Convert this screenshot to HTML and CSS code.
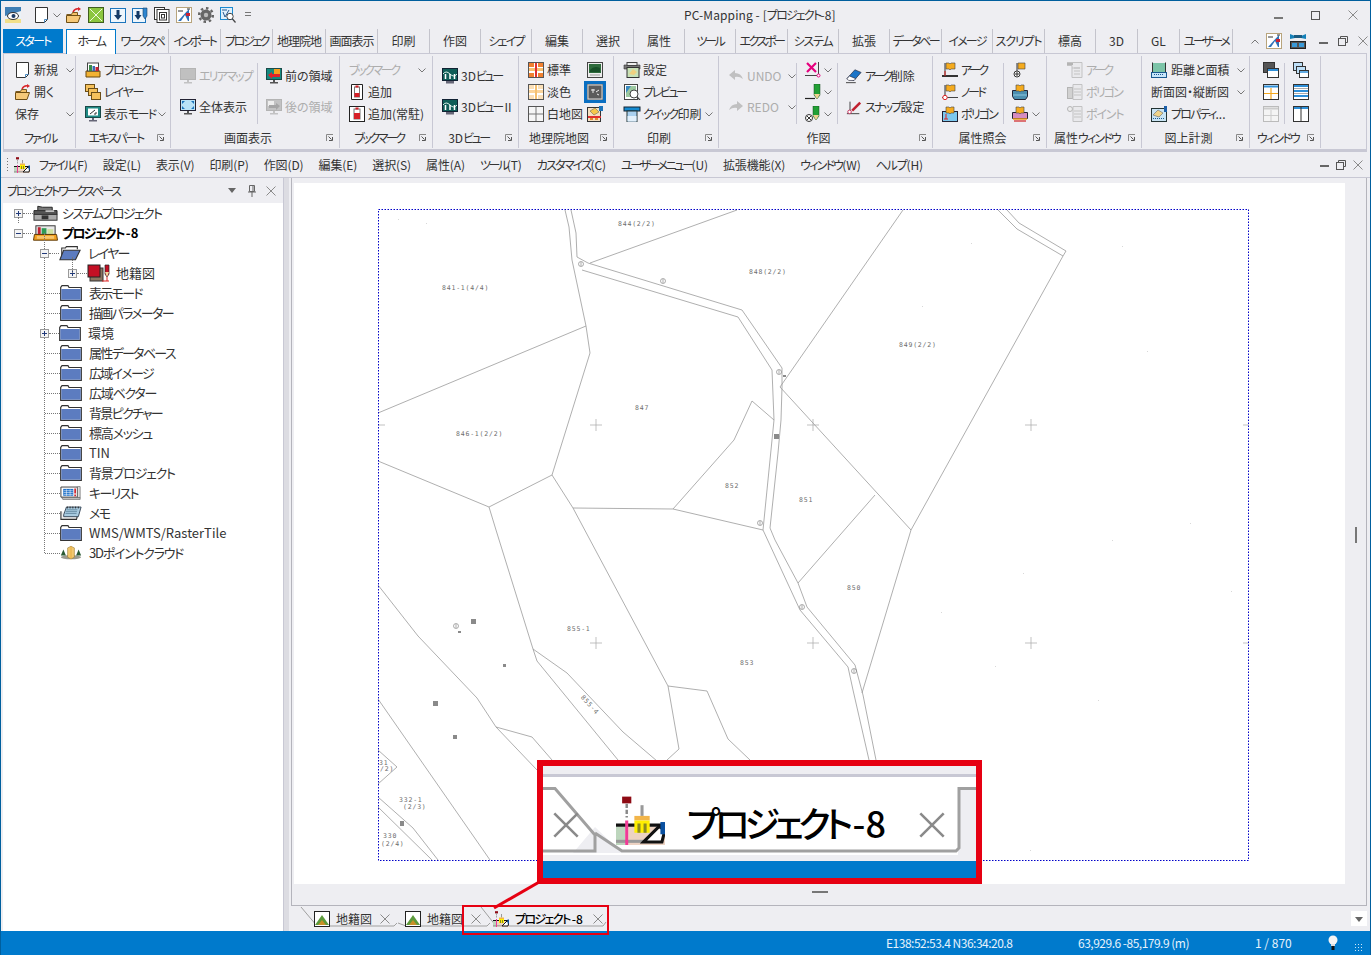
FILE: index.html
```html
<!DOCTYPE html>
<html lang="ja">
<head>
<meta charset="utf-8">
<title>PC-Mapping - [プロジェクト-8]</title>
<link rel="stylesheet" href="styles.css">
</head>
<body>
<svg class="defs" xmlns="http://www.w3.org/2000/svg">
  <symbol id="doc" viewBox="0 0 16 16"><path d="M1.500 .5h12v12l-3 3h-9z" fill="#fff" stroke="#333"/><path d="M10.500 15.500v-3h3" fill="none" stroke="#4a8ac0"/></symbol>
  <symbol id="open" viewBox="0 0 16 16"><path d="M.5 7.500h5l1-2h5v3" fill="#f3c168" stroke="#7a5a20"/><path d="M.5 15.500v-7h14l-2.500 7z" fill="#f6c978" stroke="#6e4e14"/><path d="M7 5q2-4 6-3" fill="none" stroke="#d9252a" stroke-width="1.500"/><path d="M12 0l3 2-3 2z" fill="#d9252a"/></symbol>
  <symbol id="xg" viewBox="0 0 16 16"><rect x=".5" y=".5" width="15" height="15" fill="#8cc63f" stroke="#3f5d20"/><path d="M2 2l12 12M14 2L2 14" stroke="#f2f8e0"/></symbol>
  <symbol id="dl" viewBox="0 0 16 16"><rect x=".5" y="1.500" width="15" height="14" fill="#eef6fc" stroke="#1c75bc"/><path d="M6.500 3h3v5h2.500l-4 5-4-5h2.500z" fill="#143a66"/></symbol>
  <symbol id="dlp" viewBox="0 0 16 16"><rect x=".5" y="1.500" width="13" height="14" fill="#eef6fc" stroke="#1c75bc"/><path d="M4.500 4h3v4h2l-3.500 5-3.500-5h2z" fill="#143a66"/><path d="M11 1h4v8l-2 3-2-3z" fill="#2e86d0" stroke="#1a3f66" stroke-width=".6"/></symbol>
  <symbol id="copies" viewBox="0 0 16 16" fill="#fff" stroke="#333"><rect x=".5" y=".5" width="10" height="12"/><rect x="3" y="2.500" width="12" height="13"/><rect x="5.500" y="5.500" width="7" height="7.500"/><rect x="7.500" y="7.500" width="3" height="3.500"/></symbol>
  <symbol id="lay" viewBox="0 0 16 16"><rect x=".5" y=".5" width="15" height="15" fill="#fff" stroke="#b8a47c"/><path d="M2 14L13 2v12z" fill="#2f72b8"/><path d="M5 14l4-6 3 6z" fill="#fff"/><rect x="10" y="6" width="4" height="3" fill="#cc2233"/><path d="M2 4h5M11 2h3" stroke="#333"/></symbol>
  <symbol id="gear" viewBox="0 0 16 16"><circle cx="8" cy="8" r="5.500" fill="#666"/><circle cx="8" cy="8" r="6.800" fill="none" stroke="#666" stroke-width="2.500" stroke-dasharray="2.500 2.800"/><circle cx="8" cy="8" r="2.200" fill="#bbb"/></symbol>
  <symbol id="find" viewBox="0 0 16 16"><rect x=".5" y=".5" width="12" height="12" fill="#dff0fb" stroke="#1c8ad0"/><path d="M2 3l5 0M3 5l2 5 4-7" fill="none" stroke="#2a5a90"/><circle cx="10" cy="9.500" r="3.200" fill="#fff" stroke="#444"/><path d="M12.500 12l3 3.500" stroke="#444" stroke-width="1.200"/></symbol>
  <symbol id="app" viewBox="0 0 16 16"><rect width="16" height="16" fill="#eaf2f8"/><path d="M0 0h16v4L0 9z" fill="#3f7fb5"/><path d="M0 12h16v4H0z" fill="#f2e08a"/><ellipse cx="8" cy="9" rx="5.500" ry="3.500" fill="#fff" stroke="#333"/><circle cx="8.500" cy="9" r="2" fill="#1d3d66"/></symbol>
  <symbol id="proj" viewBox="0 0 16 16"><path d="M1 9h14v6H1z" fill="#f2b233" stroke="#6b4a10"/><rect x="2.500" y="1" width="11" height="8" fill="#fff" stroke="#444"/><rect x="4" y="3" width="3" height="6" fill="#3a8a4a"/><rect x="7.500" y="4" width="2.500" height="5" fill="#3b6bb5"/><rect x="10.500" y="5" width="3" height="4" fill="#cc2233"/></symbol>
  <symbol id="layer" viewBox="0 0 16 16" fill="#f5c15c" stroke="#6b4e18"><rect x=".5" y=".5" width="9" height="7"/><rect x="3.500" y="4.500" width="9" height="7"/><rect x="6.500" y="8.500" width="9" height="7"/></symbol>
  <symbol id="mview" viewBox="0 0 16 16"><rect x=".5" y=".5" width="15" height="11" fill="#1f8a85" stroke="#1a4a48"/><rect x="3" y="2.500" width="10" height="7" fill="#fff"/><path d="M5 8l5-4M9 8h2V6" stroke="#333" fill="none"/><path d="M7 12h2v2h3v1.500H4V14h3z" fill="#667"/></symbol>
  <symbol id="marea" viewBox="0 0 16 16"><rect x=".5" y=".5" width="15" height="11" fill="#b8b8b8" stroke="#aaa"/><path d="M7 12h2v2h3v1.500H4V14h3z" fill="#bbb"/></symbol>
  <symbol id="mprev" viewBox="0 0 16 16"><rect x=".5" y=".5" width="15" height="11" fill="#148a80" stroke="#1a4a48"/><rect x="8" y="1" width="6" height="5" fill="#f6a01e"/><path d="M2 7l4-3v2h8v3H6v2z" fill="#e0242a"/><path d="M7 12h2v2h3v1.500H4V14h3z" fill="#555"/></symbol>
  <symbol id="mall" viewBox="0 0 16 16"><rect x=".5" y=".5" width="15" height="11" fill="#b8e2f7" stroke="#223"/><path d="M2 2l3 0-3 3zM14 2v3l-3-3zM2 10V7l3 3zM14 10h-3l3-3z" fill="#1c75bc"/><path d="M7 12h2v2h3v1.500H4V14h3z" fill="#555"/></symbol>
  <symbol id="mnext" viewBox="0 0 16 16"><rect x=".5" y=".5" width="15" height="11" fill="#bbb" stroke="#aaa"/><rect x="2" y="2" width="6" height="5" fill="#eee"/><path d="M14 7l-4-3v2H3v3h7v2z" fill="#999"/><path d="M7 12h2v2h3v1.500H4V14h3z" fill="#bbb"/></symbol>
  <symbol id="bk1" viewBox="0 0 16 16"><path d="M2.500 .5h11v15h-11z" fill="#fff" stroke="#222"/><rect x="5.500" y="3" width="5" height="10" fill="#fff" stroke="#777"/><rect x="5.500" y="9" width="5" height="4" fill="#d62028"/><rect x="6.500" y="1.500" width="3" height="2" fill="#d62028"/></symbol>
  <symbol id="bk2" viewBox="0 0 16 16"><rect x=".5" y=".5" width="15" height="15" fill="#fff" stroke="#222"/><rect x="5" y="3" width="6" height="10" fill="#fff" stroke="#777"/><rect x="5" y="7" width="6" height="6" fill="#d62028"/><rect x="6.500" y="1.500" width="3" height="2" fill="#d62028"/></symbol>
  <symbol id="m3d" viewBox="0 0 16 16"><rect x=".5" y=".5" width="15" height="12" fill="#0f5e58" stroke="#123"/><path d="M1 6q3-4 7 0t7 0" fill="none" stroke="#d8f0e8"/><path d="M3.500 6v5M8 6v5M12.500 6v5" stroke="#fff" stroke-width="1.500"/><path d="M4 13h8v2.500H4z" fill="#667"/></symbol>
  <symbol id="gstd" viewBox="0 0 16 16"><rect x=".5" y=".5" width="15" height="15" fill="#fff" stroke="#555"/><path d="M1 1h5v4H1zM10 1h5v4h-5zM1 11h5v4H1zM10 11h5v4h-5z" fill="#f08030"/><path d="M1 6h14v3H1z" fill="#f8c070"/><path d="M7 1h2v14H7z" fill="#e03030"/></symbol>
  <symbol id="gpale" viewBox="0 0 16 16"><rect x=".5" y=".5" width="15" height="15" fill="#fff" stroke="#555"/><path d="M1 1h5v4H1zM10 1h5v4h-5zM1 11h5v4H1zM10 11h5v4h-5z" fill="#fbe0b8"/><path d="M1 6h14v3H1z" fill="#fbd49a"/><path d="M7 1h2v14H7z" fill="#f5c070"/></symbol>
  <symbol id="gwhite" viewBox="0 0 16 16"><rect x=".5" y=".5" width="15" height="15" fill="#f6f6f6" stroke="#555"/><path d="M8 1v14M1 8h14" stroke="#777"/></symbol>
  <symbol id="gphoto" viewBox="0 0 16 16"><rect x=".5" y=".5" width="15" height="15" fill="#eee" stroke="#444"/><rect x="2" y="2" width="12" height="9" fill="#2e6b3c"/><path d="M3 8q4-5 10-2v4H3z" fill="#185028"/><path d="M3 13h10" stroke="#999"/></symbol>
  <symbol id="gcol" viewBox="0 0 16 16"><rect width="16" height="16" fill="#666"/><rect x="1" y="1" width="14" height="14" fill="#5c5c5c" stroke="#ddd"/><path d="M4 6h4M6 5v4M9 8l3-2M10 10l2 1" stroke="#eee"/></symbol>
  <symbol id="gedit" viewBox="0 0 16 16"><rect x=".5" y="1.500" width="13" height="14" fill="#f5e0c0" stroke="#333"/><path d="M1 10h13v2H1z" fill="#e03030"/><path d="M3 5l5-3 4 4-5 3z" fill="#f5c84a" stroke="#555" stroke-width=".5"/><rect x="12" y="0" width="4" height="5" fill="#1c75bc"/><path d="M3 13h3M8 13h3" stroke="#e08a30" stroke-width="2"/></symbol>
  <symbol id="pset" viewBox="0 0 18 16"><path d="M1 3h16v4H1z" fill="#777" stroke="#333" stroke-width=".6"/><rect x="4" y=".5" width="10" height="3" fill="#eee" stroke="#444"/><rect x="4" y="5.500" width="12" height="10" fill="#c9e2b8" stroke="#333"/><path d="M6 12l4-5 4 3-3 3z" fill="#f0d080"/></symbol>
  <symbol id="pprev" viewBox="0 0 16 16"><rect x=".5" y=".5" width="13" height="15" fill="#fff" stroke="#444"/><rect x="2" y="2" width="10" height="11" fill="#9cc8a0"/><path d="M2 2h5l-5 7z" fill="#3a8ac0"/><circle cx="10" cy="10" r="4" fill="#fff" stroke="#444"/><path d="M13 13l3 3" stroke="#444" stroke-width="1.300"/></symbol>
  <symbol id="pq" viewBox="0 0 18 16"><rect x="1" y="1" width="16" height="4" fill="#148ad0" stroke="#123"/><rect x="4" y="5" width="10" height="11" fill="#a9d0ef" stroke="#233"/><rect x="4.500" y="10" width="9" height="5.500" fill="#e2f0fb"/></symbol>
  <symbol id="undo" viewBox="0 0 16 16"><path d="M1 7l6-5v3q6 0 8 6-4-3-8-2v3z" fill="#b9b9b9"/></symbol>
  <symbol id="redo" viewBox="0 0 16 16"><path d="M15 7L9 2v3Q3 5 1 11q4-3 8-2v3z" fill="#b9b9b9"/></symbol>
  <symbol id="dx" viewBox="0 0 16 16"><path d="M2 1l9 9M11 1l-9 9" stroke="#e6007e" stroke-width="2.200"/><path d="M0 13.500h12M13.500 0v12" stroke="#444"/><circle cx="13.500" cy="13.500" r="1.500" fill="#fff" stroke="#e6007e"/></symbol>
  <symbol id="dp" viewBox="0 0 16 16"><path d="M0 14.500h10" stroke="#222" stroke-width="1.200"/><path d="M9 0h6v11l-3 4-3-4z" fill="#21a035" stroke="#1a4a20" stroke-width=".5"/><path d="M9 10h6l-3 5z" fill="#f0d090"/></symbol>
  <symbol id="dc" viewBox="0 0 16 16"><circle cx="4" cy="12" r="3.500" fill="#fff" stroke="#333"/><path d="M2 10l4 4M6 10l-4 4" stroke="#333"/><path d="M8 0h6v10l-3 4-3-4z" fill="#21a035" stroke="#1a4a20" stroke-width=".5"/><path d="M8 9h6l-3 5z" fill="#f0d090"/></symbol>
  <symbol id="eraser" viewBox="0 0 18 16"><path d="M1 11L10 1l7 3-8 9z" fill="#1c75c8" stroke="#223" stroke-width=".7"/><path d="M1 11l3-3 7 3-2 2H3z" fill="#fff" stroke="#223" stroke-width=".7"/><path d="M0 15.500h11" stroke="#333"/></symbol>
  <symbol id="snap" viewBox="0 0 18 16"><path d="M1 15.500h14" stroke="#333"/><path d="M4.500 2v12" stroke="#333"/><path d="M6 11l9-9 2 2-9 9z" fill="#c02030"/><circle cx="4" cy="13.500" r="2" fill="#fff" stroke="#c02050"/></symbol>
  <symbol id="flag" viewBox="0 0 16 16"><path d="M3 1v12" stroke="#333"/><path d="M4 1h3l1 1 1-1h4v6H9L8 8 7 7H4z" fill="#f5ab1e" stroke="#444" stroke-width=".6"/></symbol>
  <symbol id="qa" viewBox="0 0 16 16"><use href="#flag"/><path d="M0 14h16" stroke="#333" stroke-width="2"/><path d="M3 9v5" stroke="#d22"/></symbol>
  <symbol id="qn" viewBox="0 0 16 16"><use href="#flag"/><path d="M0 13.500h16" stroke="#444"/><circle cx="3" cy="13.500" r="2.200" fill="#fff" stroke="#d22"/></symbol>
  <symbol id="qp" viewBox="0 0 16 16"><rect x=".5" y="5.500" width="15" height="10" fill="#7cc8ee" stroke="#223"/><path d="M4 1h3l1 1 1-1h3v6H9L8 8 7 7H4z" fill="#f5ab1e" stroke="#444" stroke-width=".6"/><path d="M4 8v5M2 13h4" stroke="#d22"/></symbol>
  <symbol id="qc" viewBox="0 0 16 16"><path d="M5 1v9" stroke="#333"/><path d="M6 1h7v6H6z" fill="#f5ab1e" stroke="#444" stroke-width=".6"/><circle cx="5" cy="12" r="3" fill="#fff" stroke="#333"/><path d="M3 12h4M5 10v4" stroke="#333"/></symbol>
  <symbol id="qb" viewBox="0 0 16 16"><path d="M.5 6.500h15v6l-2 3h-11l-2-3z" fill="#4c8fb0" stroke="#223"/><path d="M1 11h14" stroke="#8cc8e0"/><path d="M4 1h3l1 1 1-1h3v6H9L8 8 7 7H4z" fill="#f5ab1e" stroke="#444" stroke-width=".6"/></symbol>
  <symbol id="qm" viewBox="0 0 16 16"><path d="M.5 6.500h15v6h-15z" fill="#d68cc0" stroke="#223"/><path d="M1 13h14" stroke="#f2a020" stroke-width="1.500"/><path d="M2 15h12" stroke="#d02020" stroke-width="1.200"/><path d="M4 1h3l1 1 1-1h3v6H9L8 8 7 7H4z" fill="#f5ab1e" stroke="#444" stroke-width=".6"/></symbol>
  <symbol id="ta" viewBox="0 0 16 16"><path d="M0 .5h15v15H5v-12H0z" fill="#e9e9ec" stroke="#bbb"/><path d="M7 6h6M7 9h6M7 12h6M5 6h8" stroke="#bbb"/><path d="M0 1h6v2H0z" fill="#aaa"/></symbol>
  <symbol id="tp" viewBox="0 0 16 16"><rect x=".5" y="3.500" width="5" height="11" fill="#ccc" stroke="#aaa"/><path d="M6 .5h9v15H6z" fill="#e9e9ec" stroke="#bbb"/><path d="M7 5h7M7 8h7M7 11h7" stroke="#bbb"/></symbol>
  <symbol id="tn" viewBox="0 0 16 16"><circle cx="3" cy="3" r="2.500" fill="#eee" stroke="#aaa"/><path d="M6 .5h9v15H6z" fill="#e9e9ec" stroke="#bbb"/><path d="M7 5h7M7 8h7M7 11h7" stroke="#bbb"/></symbol>
  <symbol id="msr" viewBox="0 0 16 16"><path d="M1.500 .5v10M14.500 .5v10" stroke="#333"/><rect x="2" y="1" width="12" height="9" fill="#7cc4a8"/><rect x=".5" y="10.500" width="15" height="5" fill="#c8e6fa" stroke="#1a5a90"/><path d="M3 12.500h10" stroke="#1a5a90" stroke-dasharray="1 1"/></symbol>
  <symbol id="prop" viewBox="0 0 16 16"><rect x=".5" y="2.500" width="15" height="13" fill="#c9e4f4" stroke="#233"/><path d="M2 9l5-5 5 3-4 4z" fill="#f0d48a" stroke="#555" stroke-width=".5"/><rect x="13" y="0" width="3" height="6" fill="#1c5fa8"/><path d="M2 12.500h12" stroke="#1a5a90" stroke-dasharray="1 1"/></symbol>
  <symbol id="w1" viewBox="0 0 16 16"><rect x=".5" y=".5" width="11" height="10" fill="#555" stroke="#333"/><rect x="4.500" y="6.500" width="11" height="9" fill="#fff" stroke="#333"/><rect x="5" y="7" width="10" height="2" fill="#2e8fd8"/></symbol>
  <symbol id="w2" viewBox="0 0 16 16" fill="#bfe0f8" stroke="#333"><rect x=".5" y=".5" width="9" height="8"/><rect x="3.500" y="4.500" width="9" height="7"/><rect x="6.500" y="8.500" width="9" height="7" fill="#fff"/><path d="M7 10h8" stroke="#2e8fd8" stroke-width="1.500"/></symbol>
  <symbol id="w3" viewBox="0 0 16 16"><rect x=".5" y=".5" width="15" height="15" fill="#fff" stroke="#333"/><path d="M1 2.500h14" stroke="#2e8fd8" stroke-width="2"/><path d="M8 4v11M1 9.500h14" stroke="#f5a81e" stroke-width="1.200"/></symbol>
  <symbol id="w4" viewBox="0 0 16 16"><rect x=".5" y=".5" width="15" height="15" fill="#fff" stroke="#333"/><path d="M1 2h14M1 7h14M1 12h14" stroke="#2e8fd8" stroke-width="2"/><path d="M1 4.500h14M1 9.500h14" stroke="#aaa"/></symbol>
  <symbol id="w5" viewBox="0 0 16 16"><rect x=".5" y=".5" width="15" height="15" fill="#f4f4f4" stroke="#bbb"/><path d="M1 2.500h14" stroke="#ccc" stroke-width="2"/><path d="M8 4v11M1 9.500h14" stroke="#ccc"/></symbol>
  <symbol id="w6" viewBox="0 0 16 16"><rect x=".5" y=".5" width="15" height="15" fill="#fff" stroke="#333"/><path d="M1 2h14" stroke="#2e8fd8" stroke-width="2"/><path d="M8 1v14" stroke="#333"/></symbol>
  <symbol id="tabwin" viewBox="0 0 18 16"><path d="M1 1l5 2 6 0 5-2v5l-5-1H6L1 6z" fill="#1480b8"/><rect x="5" y="2" width="8" height="3" fill="#1a5a80"/><rect x="1.500" y="8.500" width="15" height="7" fill="#555" stroke="#222"/><rect x="3" y="10" width="5" height="4" fill="#3a9ad8"/><rect x="10" y="10" width="5" height="4" fill="#3a9ad8"/></symbol>
  <symbol id="mapic" viewBox="0 0 16 16"><rect x="2" y=".2" width="3" height="2.200" fill="#8e0b14"/><path d="M3.500 2.500v4.500" stroke="#888" stroke-width=".8" stroke-dasharray="1.400 .6"/><path d="M8.500 3v3.500" stroke="#999"/><rect x="0" y="10" width="3" height="6" fill="#bdd6bd"/><rect x="4" y="10" width="12" height="6" fill="#edd3c3"/><path d="M0 14.800h9" stroke="#999"/><path d="M0 9.500h16" stroke="#111"/><rect x="3" y="8" width="1" height="8" fill="#f03c96"/><rect x="6" y="6.500" width="5" height="1.500" fill="#f2b54a"/><rect x="6" y="8" width="5" height="4" fill="#ffef00"/><path d="M7.500 9v3M9.500 9v3" stroke="#8a8a20"/><path d="M9 15l5-5 2 1-1 4z" fill="#fff" stroke="#111"/><path d="M14.500 8.500h1.500v4h-1.500z" fill="#0a50a0"/></symbol>
  <symbol id="fld" viewBox="0 0 22 16"><path d="M.7 2.500V15.300h20.600V2.500H9L8 .7H2z" fill="#fff" stroke="#333" stroke-width="1.200"/><rect x="1.300" y="4" width="19.400" height="10.700" fill="#5c7cc0"/></symbol>
  <symbol id="fldo" viewBox="0 0 24 16"><path d="M3 12V2.500h4L8 1h12v3" fill="#fff" stroke="#333" stroke-width="1.200"/><path d="M1 15.300L5 5h18l-5 10.300z" fill="#5c7cc0" stroke="#333" stroke-width="1.200"/></symbol>
  <symbol id="sys" viewBox="0 0 26 16"><path d="M5 5V1l5 1h10v3" fill="#777" stroke="#222"/><path d="M1 5.500h24v4H1z" fill="#555" stroke="#222"/><rect x="1" y="9.500" width="24" height="6" fill="#aaa" stroke="#333"/><rect x="9" y="10.500" width="7" height="4" fill="#333"/><path d="M13 6h9" stroke="#ddd" stroke-width="1.500"/></symbol>
  <symbol id="prj" viewBox="0 0 26 16"><rect x="3" y=".5" width="20" height="9" fill="#e8e8e8" stroke="#333"/><rect x="5" y="2" width="3" height="7" fill="#c02030"/><rect x="9" y="3" width="5" height="6" fill="#2f9a55"/><rect x="15" y="4" width="6" height="5" fill="#cfe2a0"/><path d="M.5 15.500l1-6h23l1 6z" fill="#f2a01e" stroke="#5e3a08"/><path d="M4 11h18v3H4z" fill="#f7c56c"/></symbol>
  <symbol id="lred" viewBox="0 0 26 18"><rect x="3" y="4" width="13" height="13" fill="#8a7460" stroke="#333"/><rect x="1" y="1" width="12" height="12" fill="#c40f24" stroke="#222"/><path d="M18 1h4v9l-2 3-2-3z" fill="#c40f24" stroke="#222" stroke-width=".7"/><path d="M18 8h4l-2 5z" fill="#f3d9a0"/><path d="M15 17h7M20 13v4" stroke="#d22"/></symbol>
  <symbol id="keyl" viewBox="0 0 24 16"><path d="M1 1.500h18v11H1z" fill="#fff" stroke="#333"/><path d="M2 13h20v2H3z" fill="#ccc" stroke="#444" stroke-width=".6"/><path d="M19 1h3v12h-3z" fill="#ddd" stroke="#444" stroke-width=".6"/><rect x="3.500" y="3.500" width="11" height="7.500" fill="#1c6fc8"/><path d="M4 5.500h10M4 7.500h10M4 9.500h10M7 4v7M11 4v7" stroke="#fff" stroke-width=".6"/><path d="M16.500 3v5.500M16.500 9.500v2" stroke="#d0202a" stroke-width="1.800"/></symbol>
  <symbol id="memo" viewBox="0 0 24 16"><path d="M1 6v9h17l1-4" fill="#eee" stroke="#333" stroke-width="1.200"/><path d="M4 10L7 1.500h16L20 12H4z" fill="#a9cbe0" stroke="#345"/><path d="M7 4.500h12M6.500 6.500h12M6 8.500h12" stroke="#4a6f88" stroke-width=".7"/><path d="M8 1v2M11 1v2M14 1v2M17 1v2M20 1v2" stroke="#222"/></symbol>
  <symbol id="pc3d" viewBox="0 0 26 16"><ellipse cx="13" cy="13" rx="12" ry="2.500" fill="#9a9a90"/><path d="M9 2l4-2 4 2v11l-4 2-4-2z" fill="#f2c86e" stroke="#8a6a20" stroke-width=".6"/><path d="M13 0v15" stroke="#e5a93a"/><path d="M4 4L1 11h6zM22 4l-3 7h6z" fill="#2a5a34"/></symbol>
  <symbol id="mtn" viewBox="0 0 16 16"><rect x=".5" y=".5" width="15" height="15" fill="#fff" stroke="#222"/><path d="M1 14L8 4l7 10z" fill="#5c9a3c"/><path d="M4 14l4-5 4 5z" fill="#c89028"/></symbol>
  <symbol id="lnc" viewBox="0 0 8 8"><path d="M.5 7V.5H7" fill="none" stroke="#888"/><path d="M2.500 2.500l3 3M6.500 3v3.500H3" fill="none" stroke="#555"/></symbol>
  <symbol id="chv" viewBox="0 0 8 5"><path d="M.5 .5L4 4 7.500 .5" fill="none" stroke="#777"/></symbol>
  <symbol id="cross" viewBox="0 0 10 10"><path d="M.5 .5l9 9M9.500 .5l-9 9" stroke="#8a8a8a"/></symbol>
  <symbol id="restore" viewBox="0 0 10 10"><path d="M2.500 2.500V.5h7v6h-2" fill="none" stroke="#555"/><rect x=".5" y="2.500" width="7" height="7" fill="none" stroke="#555"/></symbol>
  <symbol id="pin" viewBox="0 0 10 12"><path d="M2.500 .5h5v6h-5z" fill="none" stroke="#666"/><path d="M1 7h8M5 7v5M6 1v5" stroke="#666"/></symbol>
</svg>

<div class="app">
  <header class="titlebar">
    <div class="qat">
      <svg class="ic q1"><use href="#app"/></svg>
      <svg class="ic q2"><use href="#doc"/></svg>
      <svg class="cv q3"><use href="#chv"/></svg>
      <svg class="ic"><use href="#open"/></svg>
      <svg class="ic"><use href="#xg"/></svg>
      <svg class="ic"><use href="#dl"/></svg>
      <svg class="ic"><use href="#dlp"/></svg>
      <svg class="ic"><use href="#copies"/></svg>
      <svg class="ic"><use href="#lay"/></svg>
      <svg class="ic"><use href="#gear"/></svg>
      <svg class="ic"><use href="#find"/></svg>
      <span class="qmore"></span>
    </div>
    <div class="wintitle">PC-Mapping - [<span class="k2">プロジェクト</span>-8]</div>
    <div class="winbtns">
      <span class="w-min"></span>
      <span class="w-max"></span>
      <svg class="w-close"><use href="#cross"/></svg>
    </div>
  </header>

  <nav class="tabs">
    <span class="tab start k2">スタート</span>
    <span class="tab home k3">ホーム</span>
    <span class="tab w53 k3">ワークスペ</span>
    <span class="tab w52 k3">インポート</span>
    <span class="tab w52 k3">プロジェク</span>
    <span class="tab w53 kj">地理院地</span>
    <span class="tab w52 kj">画面表示</span>
    <span class="tab w52">印刷</span>
    <span class="tab">作図</span>
    <span class="tab k2">シェイプ</span>
    <span class="tab">編集</span>
    <span class="tab">選択</span>
    <span class="tab">属性</span>
    <span class="tab k3">ツール</span>
    <span class="tab w52 k3">エクスポー</span>
    <span class="tab k1">システム</span>
    <span class="tab">拡張</span>
    <span class="tab w52 k3">データベー</span>
    <span class="tab k2">イメージ</span>
    <span class="tab w52 k1">スクリプト</span>
    <span class="tab">標高</span>
    <span class="tab short">3D</span>
    <span class="tab short">GL</span>
    <span class="tab w53 k3">ユーザーメ</span>
    <div class="tabs-right">
      <svg class="cv up"><use href="#chv"/></svg>
      <svg class="ic"><use href="#lay"/></svg>
      <svg class="ic wide"><use href="#tabwin"/></svg>
      <span class="mini-min"></span>
      <svg class="mini"><use href="#restore"/></svg>
      <svg class="mini"><use href="#cross"/></svg>
    </div>
  </nav>

  <section class="ribbon">
    <div class="group g-file">
      <div class="body">
        <div class="col c59">
          <div class="it"><svg class="ic"><use href="#doc"/></svg><span>新規</span><svg class="cv"><use href="#chv"/></svg></div>
          <div class="it"><svg class="ic"><use href="#open"/></svg><span>開く</span></div>
          <div class="it"><span>保存</span><svg class="cv"><use href="#chv"/></svg></div>
        </div>
      </div>
      <div class="label"><span class="k3">ファイル</span></div>
    </div>
    <div class="group g-expert">
      <div class="body">
        <div class="col c80">
          <div class="it"><svg class="ic"><use href="#proj"/></svg><span class="k2">プロジェクト</span></div>
          <div class="it"><svg class="ic"><use href="#layer"/></svg><span class="k1">レイヤー</span></div>
          <div class="it"><svg class="ic"><use href="#mview"/></svg><span>表示<em class="k2">モード</em></span><svg class="cv"><use href="#chv"/></svg></div>
        </div>
      </div>
      <div class="label"><span class="k2">エキスパート</span><svg class="lnc"><use href="#lnc"/></svg></div>
    </div>
    <div class="group g-view">
      <div class="body">
        <div class="col two c77">
          <div class="it off"><svg class="ic"><use href="#marea"/></svg><span class="k2">エリアマップ</span></div>
          <div class="it"><svg class="ic"><use href="#mall"/></svg><span>全体表示</span></div>
        </div>
        <i class="vsep"></i>
        <div class="col two">
          <div class="it"><svg class="ic"><use href="#mprev"/></svg><span>前の領域</span></div>
          <div class="it off"><svg class="ic"><use href="#mnext"/></svg><span>後の領域</span></div>
        </div>
      </div>
      <div class="label"><span>画面表示</span><svg class="lnc"><use href="#lnc"/></svg></div>
    </div>
    <div class="group g-book">
      <div class="body">
        <div class="col c77">
          <div class="it off"><span class="k3">ブックマーク</span><svg class="cv"><use href="#chv"/></svg></div>
          <div class="it"><svg class="ic"><use href="#bk1"/></svg><span>追加</span></div>
          <div class="it"><svg class="ic"><use href="#bk2"/></svg><span>追加(常駐)</span></div>
        </div>
      </div>
      <div class="label"><span class="k3">ブックマーク</span><svg class="lnc"><use href="#lnc"/></svg></div>
    </div>
    <div class="group g-3d">
      <div class="body">
        <div class="col two">
          <div class="it"><svg class="ic"><use href="#m3d"/></svg><span>3D<em class="k3">ビュー</em></span></div>
          <div class="it"><svg class="ic"><use href="#m3d"/></svg><span>3D<em class="k3">ビュー</em> II</span></div>
        </div>
      </div>
      <div class="label"><span>3D<em class="k3">ビュー</em></span><svg class="lnc"><use href="#lnc"/></svg></div>
    </div>
    <div class="group g-gsi">
      <div class="body">
        <div class="col c59">
          <div class="it"><svg class="ic"><use href="#gstd"/></svg><span>標準</span></div>
          <div class="it"><svg class="ic"><use href="#gpale"/></svg><span>淡色</span></div>
          <div class="it"><svg class="ic"><use href="#gwhite"/></svg><span>白地図</span></div>
        </div>
        <div class="col">
          <div class="it"><svg class="ic"><use href="#gphoto"/></svg></div>
          <div class="it active"><svg class="ic"><use href="#gcol"/></svg></div>
          <div class="it"><svg class="ic"><use href="#gedit"/></svg></div>
        </div>
      </div>
      <div class="label"><span>地理院地図</span><svg class="lnc"><use href="#lnc"/></svg></div>
    </div>
    <div class="group g-print">
      <div class="body">
        <div class="col c90">
          <div class="it"><svg class="ic p"><use href="#pset"/></svg><span>設定</span></div>
          <div class="it"><svg class="ic p"><use href="#pprev"/></svg><span class="k3">プレビュー</span></div>
          <div class="it"><svg class="ic p"><use href="#pq"/></svg><span><em class="k2">クイック</em>印刷</span><svg class="cv"><use href="#chv"/></svg></div>
        </div>
      </div>
      <div class="label"><span>印刷</span><svg class="lnc"><use href="#lnc"/></svg></div>
    </div>
    <div class="group g-draw">
      <div class="body">
        <div class="col two c68">
          <div class="it off"><svg class="ic"><use href="#undo"/></svg><span>UNDO</span><svg class="cv"><use href="#chv"/></svg></div>
          <div class="it off"><svg class="ic"><use href="#redo"/></svg><span>REDO</span><svg class="cv"><use href="#chv"/></svg></div>
        </div>
        <i class="vsep"></i>
        <div class="col c28">
          <div class="it"><svg class="ic"><use href="#dx"/></svg><svg class="cv"><use href="#chv"/></svg></div>
          <div class="it"><svg class="ic"><use href="#dp"/></svg><svg class="cv"><use href="#chv"/></svg></div>
          <div class="it"><svg class="ic"><use href="#dc"/></svg><svg class="cv"><use href="#chv"/></svg></div>
        </div>
        <i class="vsep"></i>
        <div class="col two">
          <div class="it"><svg class="ic"><use href="#eraser"/></svg><span><em class="k3">アーク</em>削除</span></div>
          <div class="it"><svg class="ic"><use href="#snap"/></svg><span><em class="k2">スナップ</em>設定</span></div>
        </div>
      </div>
      <div class="label"><span>作図</span><svg class="lnc"><use href="#lnc"/></svg></div>
    </div>
    <div class="group g-query">
      <div class="body">
        <div class="col c61">
          <div class="it"><svg class="ic"><use href="#qa"/></svg><span class="k3">アーク</span></div>
          <div class="it"><svg class="ic"><use href="#qn"/></svg><span class="k3">ノード</span></div>
          <div class="it"><svg class="ic"><use href="#qp"/></svg><span class="k2">ポリゴン</span></div>
        </div>
        <i class="vsep"></i>
        <div class="col c28">
          <div class="it"><svg class="ic"><use href="#qc"/></svg></div>
          <div class="it"><svg class="ic"><use href="#qb"/></svg></div>
          <div class="it"><svg class="ic"><use href="#qm"/></svg><svg class="cv"><use href="#chv"/></svg></div>
        </div>
      </div>
      <div class="label"><span>属性照会</span><svg class="lnc"><use href="#lnc"/></svg></div>
    </div>
    <div class="group g-attr">
      <div class="body">
        <div class="col">
          <div class="it off"><svg class="ic"><use href="#ta"/></svg><span class="k3">アーク</span></div>
          <div class="it off"><svg class="ic"><use href="#tp"/></svg><span class="k2">ポリゴン</span></div>
          <div class="it off"><svg class="ic"><use href="#tn"/></svg><span class="k1">ポイント</span></div>
        </div>
      </div>
      <div class="label"><span>属性<em class="k2">ウィンドウ</em></span><svg class="lnc"><use href="#lnc"/></svg></div>
    </div>
    <div class="group g-meas">
      <div class="body">
        <div class="col c94">
          <div class="it"><svg class="ic"><use href="#msr"/></svg><span class="gap4">距離と面積</span><svg class="cv"><use href="#chv"/></svg></div>
          <div class="it"><span>断面図・縦断図</span><svg class="cv"><use href="#chv"/></svg></div>
          <div class="it"><svg class="ic"><use href="#prop"/></svg><span class="gap4"><em class="k2">プロパティ</em>...</span></div>
        </div>
      </div>
      <div class="label"><span>図上計測</span><svg class="lnc"><use href="#lnc"/></svg></div>
    </div>
    <div class="group g-win">
      <div class="body">
        <div class="col">
          <div class="it"><svg class="ic"><use href="#w1"/></svg></div>
          <div class="it"><svg class="ic"><use href="#w3"/></svg></div>
          <div class="it"><svg class="ic"><use href="#w5"/></svg></div>
        </div>
        <i class="vsep"></i>
        <div class="col">
          <div class="it"><svg class="ic"><use href="#w2"/></svg></div>
          <div class="it"><svg class="ic"><use href="#w4"/></svg></div>
          <div class="it"><svg class="ic"><use href="#w6"/></svg></div>
        </div>
      </div>
      <div class="label"><span class="k2">ウィンドウ</span><svg class="lnc"><use href="#lnc"/></svg></div>
    </div>
  </section>

  <div class="menubar">
    <span class="grip"></span>
    <svg class="ic"><use href="#mapic"/></svg>
    <ul class="menus">
      <li><em class="k2">ファイル</em>(F)</li><li>設定(L)</li><li>表示(V)</li><li>印刷(P)</li><li>作図(D)</li><li>編集(E)</li><li>選択(S)</li><li>属性(A)</li><li><em class="k3">ツール</em>(T)</li><li><em class="k2">カスタマイズ</em>(C)</li><li><em class="k3">ユーザーメニュー</em>(U)</li><li>拡張機能(X)</li><li><em class="k2">ウィンドウ</em>(W)</li><li><em class="k1">ヘルプ</em>(H)</li>
    </ul>
    <div class="menu-right">
      <span class="mini-min"></span>
      <svg class="mini"><use href="#restore"/></svg>
      <svg class="mini"><use href="#cross"/></svg>
    </div>
  </div>

  <main class="main">
    <aside class="side">
      <div class="side-head">
        <span class="side-title">プロジェクトワークスペース</span>
        <span class="side-dots"></span>
        <span class="side-drop"></span>
        <svg class="side-pin"><use href="#pin"/></svg>
        <svg class="mini"><use href="#cross"/></svg>
      </div>
      <div class="tree">
        <div class="row l0"><b class="tg plus"></b><i class="hl"></i><svg class="ti big"><use href="#sys"/></svg><span>システムプロジェクト</span></div>
        <div class="row l0 link"><b class="tg minus"></b><i class="hl"></i><svg class="ti big"><use href="#prj"/></svg><strong>プロジェクト<em class="tail">-8</em></strong></div>
        <div class="kids">
          <div class="row l1"><b class="tg minus"></b><i class="hl"></i><svg class="ti"><use href="#fldo"/></svg><span>レイヤー</span></div>
          <div class="row l2"><b class="tg plus"></b><i class="hl"></i><svg class="ti"><use href="#lred"/></svg><span class="ls0">地籍図</span></div>
          <div class="row l1"><i class="hl long"></i><svg class="ti"><use href="#fld"/></svg><span>表示モード</span></div>
          <div class="row l1"><i class="hl long"></i><svg class="ti"><use href="#fld"/></svg><span>描画パラメーター</span></div>
          <div class="row l1"><b class="tg plus"></b><i class="hl"></i><svg class="ti"><use href="#fld"/></svg><span class="ls0">環境</span></div>
          <div class="row l1"><i class="hl long"></i><svg class="ti"><use href="#fld"/></svg><span>属性データベース</span></div>
          <div class="row l1"><i class="hl long"></i><svg class="ti"><use href="#fld"/></svg><span>広域イメージ</span></div>
          <div class="row l1"><i class="hl long"></i><svg class="ti"><use href="#fld"/></svg><span class="ls1">広域ベクター</span></div>
          <div class="row l1"><i class="hl long"></i><svg class="ti"><use href="#fld"/></svg><span>背景ピクチャー</span></div>
          <div class="row l1"><i class="hl long"></i><svg class="ti"><use href="#fld"/></svg><span class="ls1">標高メッシュ</span></div>
          <div class="row l1"><i class="hl long"></i><svg class="ti"><use href="#fld"/></svg><span class="ls0">TIN</span></div>
          <div class="row l1"><i class="hl long"></i><svg class="ti"><use href="#fld"/></svg><span class="ls1">背景プロジェクト</span></div>
          <div class="row l1"><i class="hl long"></i><svg class="ti"><use href="#keyl"/></svg><span>キーリスト</span></div>
          <div class="row l1"><i class="hl long"></i><svg class="ti"><use href="#memo"/></svg><span>メモ</span></div>
          <div class="row l1"><i class="hl long"></i><svg class="ti"><use href="#fld"/></svg><span class="ls0">WMS/WMTS/RasterTile</span></div>
          <div class="row l1"><i class="hl long"></i><svg class="ti"><use href="#pc3d"/></svg><span class="ls1">3Dポイントクラウド</span></div>
        </div>
      </div>
    </aside>
    <div class="split"></div>
    <section class="docs">
      <div class="view">
        <div class="view-main">
          <div class="canvas">
            <svg class="map" viewBox="294 183 1051 702" xmlns="http://www.w3.org/2000/svg">
              <g class="parcel">
                <polyline points="565,210 569,227 572,260 586,326 590,353 552,475 489,507 496,530 533,649 537,661 618,760"/>
                <polyline points="533,649 567,673 623,732 657,761"/>
                <polyline points="378,413 586,326"/>
                <polyline points="378,461 489,507"/>
                <polyline points="571,210 576,233 577,257 588,263 742,310 782,368 782,387 781,420 778,453 770,528 775,540 798,583 807,607 855,665 863,695 876,760"/>
                <polyline points="582,270 738,317 772,370 774,420 763,530 800,610 848,667 853,690 869,760"/>
                <polyline points="590,263 737,210"/>
                <polyline points="903,210 780,387 911,530 862,693"/>
                <polyline points="998,210 1017,229 1063,256 911,530"/>
                <polyline points="1007,210 1019,223 1066,251 1063,256"/>
                <polyline points="875,495 798,583"/>
                <polyline points="774,420 752,401 734,440 673,509 763,530"/>
                <polyline points="552,475 573,508 673,509"/>
                <polyline points="573,508 668,686 679,749 667,760"/>
                <polyline points="668,686 707,691 728,739 750,760"/>
                <polyline points="378,585 418,636 477,698 496,727 537,770"/>
                <polyline points="496,727 532,737 552,760"/>
                <polyline points="378,699 490,860"/>
                <polyline points="378,750 397,767 378,784"/>
                <polyline points="378,797 413,828 438,860"/>
                <polyline points="378,807 432,860"/>
              </g>
              <g class="cross">
                <path d="M590 425h12M596 419v12M807 425h12M813 419v12M1025 425h12M1031 419v12M590 643h12M596 637v12M807 643h12M813 637v12M1025 643h12M1031 637v12M378 425h7M1243 425h6M1243 643h6"/>
              </g>
              <g class="marks">
                <circle cx="581" cy="264" r="2.500"/><circle cx="663" cy="281" r="2.500"/><circle cx="779" cy="372" r="2.500"/><circle cx="760" cy="523" r="2.500"/><circle cx="802" cy="607" r="2.500"/><circle cx="854" cy="671" r="2.500"/><circle cx="456" cy="626" r="2.500"/>
                <path d="M581 262v4M663 279v4M779 370v4M760 521v4M802 605v4M854 669v4M456 624v4"/>
              </g>
              <g class="blobs">
                <rect x="471" y="619" width="5" height="5"/><rect x="503" y="664" width="3" height="3"/><rect x="433" y="701" width="5" height="5"/><rect x="453" y="735" width="4" height="4"/><rect x="774" y="434" width="5" height="5"/><rect x="400" y="821" width="4" height="5"/><rect x="783" y="375" width="3" height="2"/><rect x="458" y="631" width="3" height="2"/>
              </g>
              <g class="specks">
                <rect x="398" y="219" width="1" height="1"/><rect x="426" y="223" width="1" height="1"/><rect x="1122" y="246" width="1" height="1"/><rect x="922" y="306" width="1" height="1"/><rect x="1147" y="351" width="1" height="1"/><rect x="971" y="243" width="1" height="1"/><rect x="1112" y="540" width="1" height="1"/><rect x="1023" y="573" width="1" height="1"/><rect x="941" y="612" width="1" height="1"/><rect x="995" y="666" width="1" height="1"/><rect x="1231" y="591" width="1" height="1"/><rect x="1190" y="523" width="1" height="1"/><rect x="1098" y="700" width="1" height="1"/><rect x="1030" y="850" width="1" height="1"/>
              </g>
              <g class="plot">
                <text x="618" y="226">844(2/2)</text><text x="749" y="274">848(2/2)</text><text x="442" y="290">841-1(4/4)</text><text x="635" y="410">847</text><text x="456" y="436">846-1(2/2)</text><text x="725" y="488">852</text><text x="799" y="502">851</text><text x="899" y="347">849(2/2)</text><text x="847" y="590">850</text><text x="567" y="631">855-1</text><text x="740" y="665">853</text><text x="399" y="802">332-1</text><text x="403" y="809">(2/3)</text><text x="383" y="838">330</text><text x="381" y="846">(2/4)</text><text x="379" y="765">31</text><text x="380" y="771">/2)</text>
                <text class="tilt" x="578" y="707">855-4</text>
              </g>
              <rect class="extent" x="378.500" y="209.500" width="870" height="651"/>
            </svg>
          </div>
          <div class="vstrip"><span class="vthumb"></span></div>
        </div>
        <div class="hstrip"><span class="hthumb"></span></div>
      </div>
      <div class="doctabs">
        <svg class="tab-shapes" viewBox="0 0 330 24" xmlns="http://www.w3.org/2000/svg">
          <path class="s-in" d="M10 1L26 20H103l3-3M107 17l8 3h81l3-3"/>
          <path class="s-on" d="M190 1L205 20H312l3-4"/>
        </svg>
        <div class="dtab t1"><svg class="ic"><use href="#mtn"/></svg><span>地籍図</span><svg class="mini"><use href="#cross"/></svg></div>
        <div class="dtab t2"><svg class="ic"><use href="#mtn"/></svg><span>地籍図</span><svg class="mini"><use href="#cross"/></svg></div>
        <div class="dtab t3"><svg class="ic"><use href="#mapic"/></svg><strong>プロジェクト<em class="tail">-8</em></strong><svg class="mini"><use href="#cross"/></svg></div>
        <span class="dropdown"></span>
      </div>
    </section>
  </main>

  <footer class="status">
    <span class="s-a">E138:52:53.4 N36:34:20.8</span>
    <span class="s-b">63,929.6 -85,179.9 (m)</span>
    <span class="s-c">1 / 870</span>
    <svg class="lamp" viewBox="0 0 12 16"><circle cx="6" cy="5" r="4.500" fill="#f4f4f4"/><rect x="4" y="9" width="4" height="2" fill="#ddd"/><rect x="4.500" y="11" width="3" height="4" fill="#111"/></svg>
    <span class="resize"></span>
  </footer>

  <div class="callout">
    <div class="co-top"></div>
    <div class="co-white">
      <svg class="co-shapes" viewBox="0 0 433 78" xmlns="http://www.w3.org/2000/svg">
        <path class="co-gray" d="M415 11h18v67H415zM52 50l27 26H30z"/>
        <path class="co-line" d="M0 11.500H12L52 58V74H0M52 56L79 74H413l3-3V11.500H433"/>
      </svg>
      <svg class="co-x"><use href="#cross"/></svg>
      <svg class="co-icon"><use href="#mapic"/></svg>
      <span class="co-text">プロジェクト<em class="co-tail">-8</em></span>
      <svg class="co-x second"><use href="#cross"/></svg>
    </div>
    <div class="co-strip"></div>
    <div class="co-blue"></div>
  </div>
  <div class="tab-mark"></div>
  <svg class="connector" viewBox="0 0 60 40" xmlns="http://www.w3.org/2000/svg"><path d="M50 0L3 27"/></svg>
</div>
</body>
</html>
```
FILE: styles.css
```css
* { box-sizing: border-box; }
html, body { margin: 0; padding: 0; }
body {
  font-family: "Noto Sans CJK JP", "Noto Sans", sans-serif;
  font-size: 12px;
  line-height: 16px;
  color: #333;
  font-feature-settings: "palt";
  background: #eeeef2;
}
.defs { position: absolute; width: 0; height: 0; }
svg { display: block; flex: none; }
em { font-style: normal; }

/* Meiryo UI sets kana narrower than kanji; these three tighten kana runs */
.k1 { letter-spacing: -1.2px; }
.k2 { letter-spacing: -1.8px; }
.k3 { letter-spacing: -2.4px; }

.app {
  position: relative;
  width: 1371px;
  height: 955px;
  display: flex;
  flex-direction: column;
  overflow: hidden;
  background: #eeeef2;
  border-top: 1px solid #005f9e;
  border-left: 1px solid #005f9e;
  border-right: 1px solid #005f9e;
}

.ic { width: 16px; height: 16px; }
.cv { width: 8px; height: 5px; margin-left: auto; }
.mini { width: 10px; height: 10px; }
.mini-min { width: 9px; height: 2px; background: #666; margin-top: 3px; }

/* title bar */
.titlebar { height: 28px; display: flex; align-items: center; position: relative; flex: none; }
.qat { display: flex; align-items: center; gap: 6px; padding-left: 4px; }
.q1 { margin-right: 7px; }
.q2 { margin-right: -3px; }
.q3 { margin-left: 0; margin-right: -1px; }
.qmore { width: 6px; height: 7px; margin-left: 3px; border-top: 1px solid #777; background: linear-gradient(#0000 2px, #777 2px, #777 3px, #0000 3px); }
.wintitle { position: absolute; left: 683px; top: 6px; letter-spacing: .1px; }
.winbtns { margin-left: auto; display: flex; align-items: center; gap: 28px; padding-right: 12px; }
.w-min { width: 9px; height: 2px; background: #777; margin-top: 6px; }
.w-max { width: 9px; height: 9px; border: 1px solid #555; }
.w-close { width: 10px; height: 10px; }

/* ribbon tabs */
.tabs { height: 24px; flex: none; display: flex; padding-left: 2px; align-items: stretch; }
.tab {
  width: 51px;
  text-align: center;
  line-height: 24px;
  border-right: 1px solid #c4c4cc;
  white-space: nowrap;
  flex: none;
}
.tab.w52 { width: 52px; }
.tab.w53 { width: 53px; }
.tab.kj { letter-spacing: -1px; }
.tab.short { width: 42px; }
.tab.start { width: 60px; background: #007acc; color: #fff; border: 0; margin-right: 3px; }
.tab.home { width: 50px; background: #fff; border: 1px solid #007acc; border-bottom: 0; line-height: 22px; color: #333; position: relative; z-index: 1; height: 25px; }
.tabs-right { display: flex; align-items: center; margin-left: 18px; gap: 7px; }
.tabs-right .up { transform: rotate(180deg); margin: 0; }
.tabs-right .mini { margin-left: 3px; }
.tabs-right .wide { width: 18px; }
.tabs-right .mini-min { margin-left: 5px; }

/* ribbon */
.ribbon {
  height: 99px;
  flex: none;
  margin: 0 3px 0 2px;
  padding-left: 1px;
  border: 1px solid #c8c8d4;
  border-bottom-width: 3px;
  display: flex;
  align-items: flex-start;
  background: #eeeef2;
  padding-top: 2px;
}
.group { height: 92px; display: flex; flex-direction: column; border-right: 1px solid #c8c8d4; flex: none; }
.body { height: 69px; padding-top: 3px; display: flex; }
.label { flex: 1; display: flex; align-items: center; padding-top: 3px; }
.label span { flex: 1; text-align: center; }
.lnc { width: 8px; height: 8px; margin: 0 5px 0 1px; }
.col { display: flex; flex-direction: column; flex: none; }
.col.two { padding-top: 6px; gap: 9px; }
.it { display: flex; align-items: center; height: 22px; gap: 3px; white-space: nowrap; }
.it.off { color: #adadad; }
.it.off .ic { opacity: .85; }
.it.active { width: 22px; justify-content: center; margin-left: -3px; background: #0a6fc2; }
.gap4 { margin-left: 1px; }
.vsep { width: 1px; height: 61px; margin-top: 4px; background: #c8c8d4; flex: none; }
.c59 { width: 59px; }
.c61 { width: 61px; }
.c68 { width: 68px; }
.c77 { width: 77px; }
.c80 { width: 80px; }
.c90 { width: 90px; }
.c94 { width: 94px; }
.c28 { width: 28px; }

.g-file { width: 71px; }  .g-file .body { padding-left: 10px; }
.g-expert { width: 95px; } .g-expert .body { padding-left: 9px; }
.g-view { width: 169px; } .g-view .body { padding-left: 9px; }
.g-view .vsep { margin-right: 8px; }
.g-book { width: 93px; } .g-book .body { padding-left: 9px; }
.g-3d { width: 86px; } .g-3d .body { padding-left: 9px; }
.g-gsi { width: 95px; } .g-gsi .body { padding-left: 9px; }
.g-print { width: 105px; } .g-print .body { padding-left: 9px; }
.g-print .ic.p { width: 18px; }
.g-print .it { gap: 2px; }
.g-draw { width: 214px; } .g-draw .body { padding-left: 9px; }
.g-draw .vsep { margin-right: 8px; }
.g-draw .c28 { width: 32px; padding-right: 8px; }
.g-query { width: 114px; } .g-query .body { padding-left: 9px; }
.g-query .vsep { margin-right: 8px; }
.g-attr { width: 95px; } .g-attr .body { padding-left: 20px; }
.g-meas { width: 108px; } .g-meas .body { padding-left: 9px; }
.g-win { width: 71px; } .g-win .body { padding-left: 13px; }
.g-win .vsep { margin: 4px 8px 0 5px; }

/* menu bar */
.menubar { height: 26px; flex: none; display: flex; align-items: center; border-bottom: 1px solid #c8c8d4; padding-left: 5px; }
.grip { width: 3px; height: 16px; margin-right: 5px; background-image: radial-gradient(#777 .6px, transparent .7px); background-size: 3px 3px; }
.menus { list-style: none; display: flex; gap: 15px; margin: 0 0 0 9px; padding: 0; letter-spacing: -.1px; white-space: nowrap; }
.menu-right { margin-left: auto; padding-right: 7px; display: flex; gap: 7px; align-items: center; }

/* main */
.main { flex: 1; min-height: 0; display: flex; }
.side { width: 282px; display: flex; flex-direction: column; flex: none; }
.side-head { height: 25px; display: flex; align-items: center; padding: 0 7px 0 6px; flex: none; }
.side-title { letter-spacing: -2.2px; white-space: nowrap; }
.side-dots { flex: 1; min-width: 0; height: 5px; margin: 0 7px; background-image: radial-gradient(#888 .6px, transparent .7px); background-size: 2px 2px; }
.side-drop { width: 0; height: 0; border: 4px solid transparent; border-top: 5px solid #666; border-bottom: 0; margin: 0 11px 0 3px; flex: none; }
.side-pin { width: 10px; height: 12px; margin: 0 9px 0 0; }
.tree { flex: 1; background: #fff; margin-left: 2px; position: relative; font-size: 13px; }
.row { height: 20px; display: flex; align-items: center; white-space: nowrap; }
.row span, .row strong { letter-spacing: -1.7px; }
.row .ls0 { letter-spacing: 0; }
.row .ls1 { letter-spacing: -1.25px; }
.row strong { color: #000; font-weight: 700; }
.row .tail { letter-spacing: 0; margin-left: 2px; }
.tg { width: 9px; height: 9px; border: 1px solid #9a9a9a; background: #f4f4f4; flex: none; position: relative; }
.tg::before { content: ""; position: absolute; left: 1px; top: 3px; width: 5px; height: 1px; background: #223a7a; }
.tg.plus::after { content: ""; position: absolute; left: 3px; top: 1px; width: 1px; height: 5px; background: #223a7a; }
.hl { width: 10px; border-top: 1px dotted #777; flex: none; }
.hl.long { width: 15px; margin-left: 5px; }
.l0 { padding-left: 11px; }
.l1 { padding-left: 37px; }
.l2 { padding-left: 65px; }
.l0 .hl { width: 10px; }
.ti { width: 22px; height: 16px; margin-right: 7px; }
.ti.big { width: 25px; margin-right: 4px; }
.l2 .ti { width: 26px; height: 18px; margin-right: 3px; }
.kids { position: relative; }
.kids::before { content: ""; position: absolute; left: 41px; top: -10px; bottom: 10px; border-left: 1px dotted #777; }
.kids::after { content: ""; position: absolute; left: 69px; top: 14px; height: 16px; border-left: 1px dotted #777; }
.link { position: relative; }
.link::before { content: ""; position: absolute; left: 15px; top: -6px; height: 6px; border-left: 1px dotted #777; }

.split { width: 6px; background: #dcdce2; border-left: 1px solid #c8c8d4; flex: none; }
.docs { flex: 1; min-width: 0; display: flex; flex-direction: column; padding-left: 2px; }
.view { height: 728px; flex: none; border: 1px solid #b4b4bc; border-top: 0; margin-right: 3px; display: flex; flex-direction: column; padding: 5px 0 0 2px; }
.view-main { flex: 1; display: flex; min-height: 0; }
.canvas { width: 1051px; background: #fff; flex: none; }
.map { width: 1051px; height: 702px; }
.parcel polyline { fill: none; stroke: #9a9a9a; stroke-width: .8; }
.cross path { stroke: #a8a8a8; stroke-width: .7; fill: none; }
.marks circle, .marks path { fill: none; stroke: #777; stroke-width: .6; }
.blobs rect { fill: #8a8a8a; }
.specks rect { fill: #d8d8d8; }
.plot { opacity: .95; }
.plot text { font-family: "DejaVu Sans Mono", monospace; font-size: 6.500px; fill: #666; letter-spacing: .8px; font-feature-settings: normal; }
.plot .tilt { transform-box: fill-box; transform-origin: center; transform: rotate(48deg); }
.extent { fill: none; stroke: #0000c8; stroke-width: 1; stroke-dasharray: 1.500 1.500; }
.vstrip { flex: 1; display: flex; justify-content: center; padding-top: 344px; }
.vthumb { width: 2px; height: 16px; background: #777; }
.hstrip { height: 21px; flex: none; display: flex; justify-content: center; padding: 7px 21px 0 0; }
.hthumb { width: 16px; height: 2px; background: #777; }

.doctabs { flex: 1; display: flex; align-items: flex-start; position: relative; padding-top: 3px; }
.tab-shapes { position: absolute; left: 0; top: 0; width: 330px; height: 24px; }
.s-in, .s-on { fill: none; stroke: #a0a0a0; stroke-width: 1; }
.dtab { display: flex; align-items: center; height: 20px; position: relative; white-space: nowrap; }
.dtab span { margin: 0 8px 0 6px; }
.dtab strong { margin: 0 10px 0 6px; color: #000; font-weight: 500; letter-spacing: -1.6px; }
.dtab .tail { letter-spacing: 0; margin-left: 2px; }
.t1 { margin-left: 23px; width: 91px; }
.t2 { width: 88px; }
.t3 { width: 120px; }
.dropdown { position: absolute; right: 3px; top: 5px; width: 16px; height: 15px; background: #fff; }
.dropdown::after { content: ""; position: absolute; left: 4px; top: 6px; border: 4px solid transparent; border-top: 5px solid #666; border-bottom: 0; }

/* status */
.status { height: 24px; flex: none; background: #007acc; color: #e6f2fb; display: flex; align-items: center; margin: 0 -1px; white-space: nowrap; letter-spacing: -.5px; }
.s-a { margin-left: 886px; width: 192px; }
.s-b { width: 177px; }
.s-c { width: 72px; letter-spacing: 0; }
.lamp { width: 12px; height: 16px; }
.resize { width: 8px; height: 8px; margin-left: 15px; margin-top: 8px; background-image: radial-gradient(#cfe6f6 .8px, transparent .9px); background-size: 3px 3px; }

/* magnified tab overlay */
.callout { position: absolute; left: 536px; top: 759px; width: 445px; height: 124px; border: 6px solid #e60012; display: flex; flex-direction: column; background: #fff; }
.co-top { height: 11px; flex: none; background: #eeeef2; border-bottom: 3px solid #c8c8d4; }
.co-white { height: 78px; flex: none; position: relative; display: flex; align-items: center; background: #fff; padding-top: 18px; }
.co-shapes { position: absolute; left: 0; top: 0; width: 433px; height: 78px; }
.co-gray { fill: #eeeef2; }
.co-line { fill: none; stroke: #a0a0a0; stroke-width: 3; }
.co-x { width: 26px; height: 26px; margin-left: 10px; position: relative; }
.co-icon { width: 49px; height: 49px; margin: -10px 0 0 37px; position: relative; }
.co-text { font-size: 36px; line-height: 44px; font-weight: 500; color: #000; margin: -6px 0 0 22px; position: relative; white-space: nowrap; letter-spacing: -5.400px; }
.co-tail { letter-spacing: 0; margin-left: 5px; }
.co-x.second { margin-left: 33px; }
.co-strip { height: 6px; flex: none; background: #eeeef2; }
.co-blue { flex: 1; background: #007acc; }
.tab-mark { position: absolute; left: 461px; top: 904px; width: 147px; height: 30px; border: 2px solid #e60012; }
.connector { position: absolute; left: 490px; top: 880px; width: 60px; height: 40px; }
.connector path { fill: none; stroke: #e60012; stroke-width: 3; }
```
